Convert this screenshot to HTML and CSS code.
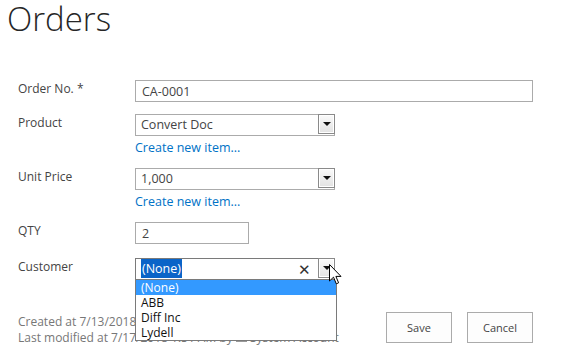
FILE: index.html
```html
<!DOCTYPE html>
<html lang="en">
<head>
  <meta charset="UTF-8">
  <title>Orders</title>
  <link rel="stylesheet" href="styles.css">
</head>
<body>
  <h1 class="page-title">Orders</h1>

  <form class="item-form">
    <div class="form-row">
      <label class="form-label">Order No. <span class="req">*</span></label>
      <div class="form-field">
        <input class="text-input wide" value="CA-0001">
      </div>
    </div>

    <div class="form-row">
      <label class="form-label">Product</label>
      <div class="form-field">
        <div class="combo">
          <span class="combo-value">Convert Doc</span>
          <span class="combo-btn"><span class="tri"></span></span>
        </div>
        <a class="new-link">Create new item...</a>
      </div>
    </div>

    <div class="form-row">
      <label class="form-label">Unit Price</label>
      <div class="form-field">
        <div class="combo">
          <span class="combo-value">1,000</span>
          <span class="combo-btn"><span class="tri"></span></span>
        </div>
        <a class="new-link">Create new item...</a>
      </div>
    </div>

    <div class="form-row qty-row">
      <label class="form-label">QTY</label>
      <div class="form-field">
        <input class="text-input short" value="2">
      </div>
    </div>

    <div class="form-row">
      <label class="form-label">Customer</label>
      <div class="form-field">
        <div class="combo open">
          <span class="combo-value"><span class="sel">(None)</span></span>
          <span class="combo-clear">&#x2715;</span>
          <span class="combo-btn"><span class="tri"></span></span>
          <svg class="cursor" width="13" height="22" viewBox="0 0 13 22">
            <path d="M0.5 0.5 L0.5 17 L4.5 13.2 L7.3 19.8 L9.6 18.8 L6.9 12.4 L12 12.4 Z" fill="#fff" stroke="#000" stroke-width="1"/>
          </svg>
          <ul class="combo-list">
            <li class="hi">(None)</li>
            <li>ABB</li>
            <li>Diff Inc</li>
            <li>Lydell</li>
          </ul>
        </div>
      </div>
    </div>

    <div class="form-footer">
      <div class="meta">
        <div>Created at 7/13/2018 4:12 AM by <span class="user-box"></span> System Account</div>
        <div>Last modified at 7/17/2018 1:51 AM by <span class="user-box"></span> System Account</div>
      </div>
      <div class="actions">
        <button type="button" class="btn">Save</button>
        <button type="button" class="btn">Cancel</button>
      </div>
    </div>
  </form>
</body>
</html>
```

FILE: styles.css
```css
body {
  margin: 0;
  font-family: 'Open Sans', 'Liberation Sans', sans-serif;
  color: #444;
  background: #fff;
}
.page-title {
  margin: 0;
  padding: 0 0 0 7px;
  height: 80px;
  font-size: 33px;
  font-weight: 300;
  line-height: 38px;
  color: #262626;
}
.item-form {
  padding-left: 18px;
  width: 515px;
}
.form-row {
  display: grid;
  grid-template-columns: 117px 1fr;
  margin-bottom: 12px;
}
.form-row.qty-row {
  margin-bottom: 14px;
}
.form-label {
  font-size: 12px;
  line-height: 18px;
}
.req {
  color: #444;
}
.form-field {
  display: flex;
  flex-direction: column;
  align-items: flex-start;
}
.text-input {
  box-sizing: border-box;
  height: 22px;
  border: 1px solid #ababab;
  padding: 0 6px;
  font-family: inherit;
  font-size: 12.5px;
  color: #444;
  outline: none;
}
.text-input.wide {
  width: 398px;
}
.text-input.short {
  width: 114px;
}
.combo {
  position: relative;
  box-sizing: border-box;
  width: 200px;
  height: 22px;
  border: 1px solid #ababab;
  display: flex;
  align-items: center;
  font-size: 12.5px;
  color: #444;
}
.combo-value {
  flex: 1;
  padding-left: 5px;
  line-height: 20px;
}
.combo-btn {
  box-sizing: border-box;
  width: 17px;
  height: 20px;
  margin-right: -1px;
  margin-top: -2px;
  border: 1px solid #8a8a8a;
  box-shadow: inset 0 0 0 1px #fff;
  background: linear-gradient(#fafafa, #e2e2e2);
  display: flex;
  align-items: center;
  justify-content: center;
}
.tri {
  width: 0;
  height: 0;
  border-left: 4px solid transparent;
  border-right: 4px solid transparent;
  border-top: 4px solid #111;
}
.new-link {
  font-size: 12.5px;
  line-height: 16px;
  margin-top: 4px;
  color: #0072c6;
  cursor: pointer;
}
.combo.open {
  border-color: #7a7a7a;
  color: #222;
}
.sel {
  background: #0a64c8;
  color: #fff;
  padding: 1px 1px;
}
.combo-clear {
  font-size: 15px;
  color: #333;
  margin-right: 7px;
}
.cursor {
  position: absolute;
  right: -8px;
  top: 5px;
  z-index: 3;
}
.combo-list {
  position: absolute;
  left: -1px;
  top: 20px;
  width: 200px;
  margin: 0;
  padding: 0;
  list-style: none;
  background: #fff;
  border: 1px solid #7a7a7a;
  z-index: 2;
  font-size: 12px;
  color: #111;
}
.combo-list li {
  height: 15px;
  line-height: 15px;
  padding-left: 5px;
}
.combo-list li.hi {
  background: #3399ff;
  color: #fff;
}
.form-footer {
  display: flex;
  justify-content: space-between;
  align-items: flex-start;
  margin-top: 32px;
}
.meta {
  font-size: 12px;
  line-height: 16px;
  color: #777;
  padding-top: 2px;
  white-space: nowrap;
}
.user-box {
  display: inline-block;
  width: 9px;
  height: 8px;
  border: 1px solid #999;
}
.actions {
  display: flex;
  gap: 15px;
}
.btn {
  width: 66px;
  height: 31px;
  border: 1px solid #ababab;
  background: #fdfdfd;
  font-family: inherit;
  font-size: 11px;
  color: #444;
}
```
